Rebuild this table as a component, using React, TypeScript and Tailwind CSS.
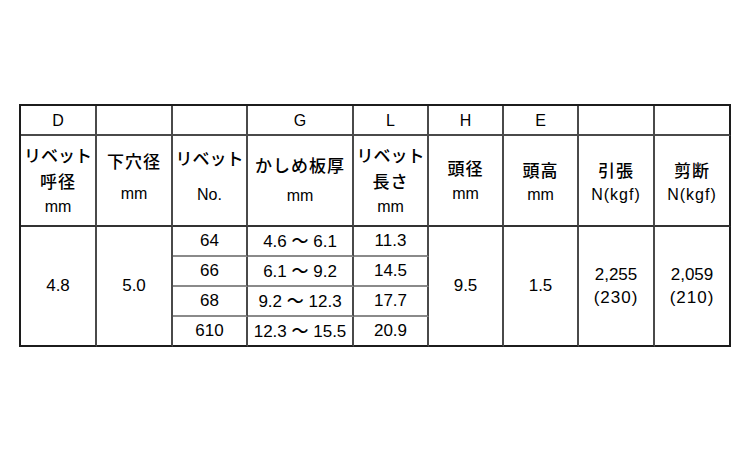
import React from 'react'

// rivet spec table

const latin = { fontFamily: '"Liberation Sans", Arial, sans-serif' }
const jp = { fontFamily: '"Noto Sans CJK JP", "Liberation Sans", sans-serif' }

type Line = { t: string; jp?: boolean; track?: boolean }

function Head({ lines, cls, last }: { lines: Line[]; cls: string; last?: boolean }) {
  return (
    <div
      className={`flex flex-col items-center justify-center border-b-2 border-r-2 border-b-[#333] ${last ? 'border-r-[#1c1c1c]' : 'border-r-[#4a4a4a]'} ${cls}`}
    >
      {lines.map((l, i) => (
        <span
          key={i}
          style={l.jp ? jp : latin}
          className={
            l.jp
              ? `text-[17px] font-medium ${l.track ? 'tracking-[1px]' : ''}`
              : `text-[16px] ${l.track ? 'tracking-[1px]' : ''}`
          }
        >
          {l.t}
        </span>
      ))}
    </div>
  )
}

function Letter({ t, last }: { t: string; last?: boolean }) {
  return (
    <div
      style={latin}
      className={`flex items-center justify-center pt-[2px] text-[16px] border-b-2 border-r-2 border-b-[#4a4a4a] ${last ? 'border-r-[#1c1c1c]' : 'border-r-[#4a4a4a]'}`}
    >
      {t}
    </div>
  )
}

function Cell({ children, span, bottom, last, leading }: { children: React.ReactNode; span?: boolean; bottom: 'light' | 'outer'; last?: boolean; leading?: string }) {
  return (
    <div
      style={latin}
      className={`flex flex-col items-center justify-center text-[17px] border-b-2 border-r-2 ${span ? 'row-span-4' : ''} ${bottom === 'outer' ? 'border-b-[#1c1c1c]' : 'border-b-[#8a8a8a]'} ${last ? 'border-r-[#1c1c1c]' : 'border-r-[#4a4a4a]'} ${leading ?? ''}`}
    >
      {children}
    </div>
  )
}

const rows = [
  ['64', '4.6', '6.1', '11.3'],
  ['66', '6.1', '9.2', '14.5'],
  ['68', '9.2', '12.3', '17.7'],
  ['610', '12.3', '15.5', '20.9'],
]

function Range({ a, b }: { a: string; b: string }) {
  return (
    <span className="whitespace-pre">
      {a} <span style={jp} className="font-medium">〜</span> {b}
    </span>
  )
}

export default function App() {
  return (
    <div className="w-[750px] h-[450px] bg-white text-black pl-[19px] pt-[104px]">
      <div className="grid w-fit grid-cols-[76px_76px_75px_106px_75px_75px_75px_76px_76px] grid-rows-[30px_91px_30px_30px_30px_30px] border-l-2 border-t-2 border-[#1c1c1c]">
        <Letter t="D" />
        <Letter t="" />
        <Letter t="" />
        <Letter t="G" />
        <Letter t="L" />
        <Letter t="H" />
        <Letter t="E" />
        <Letter t="" />
        <Letter t="" last />

        <Head cls="leading-[26px]" lines={[{ t: 'リベット', jp: true }, { t: '呼径', jp: true, track: true }, { t: 'mm' }]} />
        <Head cls="leading-[33px] pb-[7px]" lines={[{ t: '下穴径', jp: true, track: true }, { t: 'mm' }]} />
        <Head cls="leading-[37px] pb-[9px]" lines={[{ t: 'リベット', jp: true }, { t: 'No.' }]} />
        <Head cls="leading-[31px] pb-[2px]" lines={[{ t: 'かしめ板厚', jp: true, track: true }, { t: 'mm' }]} />
        <Head cls="leading-[26px]" lines={[{ t: 'リベット', jp: true }, { t: '長さ', jp: true, track: true }, { t: 'mm' }]} />
        <Head cls="leading-[26px]" lines={[{ t: '頭径', jp: true, track: true }, { t: 'mm' }]} />
        <Head cls="leading-[25px] pt-[3px]" lines={[{ t: '頭高', jp: true, track: true }, { t: 'mm' }]} />
        <Head cls="leading-[25px] pt-[3px]" lines={[{ t: '引張', jp: true, track: true }, { t: 'N(kgf)', track: true }]} />
        <Head cls="leading-[25px] pt-[3px]" lines={[{ t: '剪断', jp: true, track: true }, { t: 'N(kgf)', track: true }]} last />

        {rows.map((r, i) => {
          const b = i === 3 ? 'outer' : 'light'
          return (
            <React.Fragment key={r[0]}>
              {i === 0 && (
                <>
                  <Cell span bottom="outer">4.8</Cell>
                  <Cell span bottom="outer">5.0</Cell>
                </>
              )}
              <Cell bottom={b}>{r[0]}</Cell>
              <Cell bottom={b}><Range a={r[1]} b={r[2]} /></Cell>
              <Cell bottom={b}>{r[3]}</Cell>
              {i === 0 && (
                <>
                  <Cell span bottom="outer">9.5</Cell>
                  <Cell span bottom="outer">1.5</Cell>
                  <Cell span bottom="outer" leading="leading-[23px]">
                    <span>2,255</span>
                    <span className="tracking-[1px]">(230)</span>
                  </Cell>
                  <Cell span bottom="outer" leading="leading-[23px]" last>
                    <span>2,059</span>
                    <span className="tracking-[1px]">(210)</span>
                  </Cell>
                </>
              )}
            </React.Fragment>
          )
        })}
      </div>
    </div>
  )
}
